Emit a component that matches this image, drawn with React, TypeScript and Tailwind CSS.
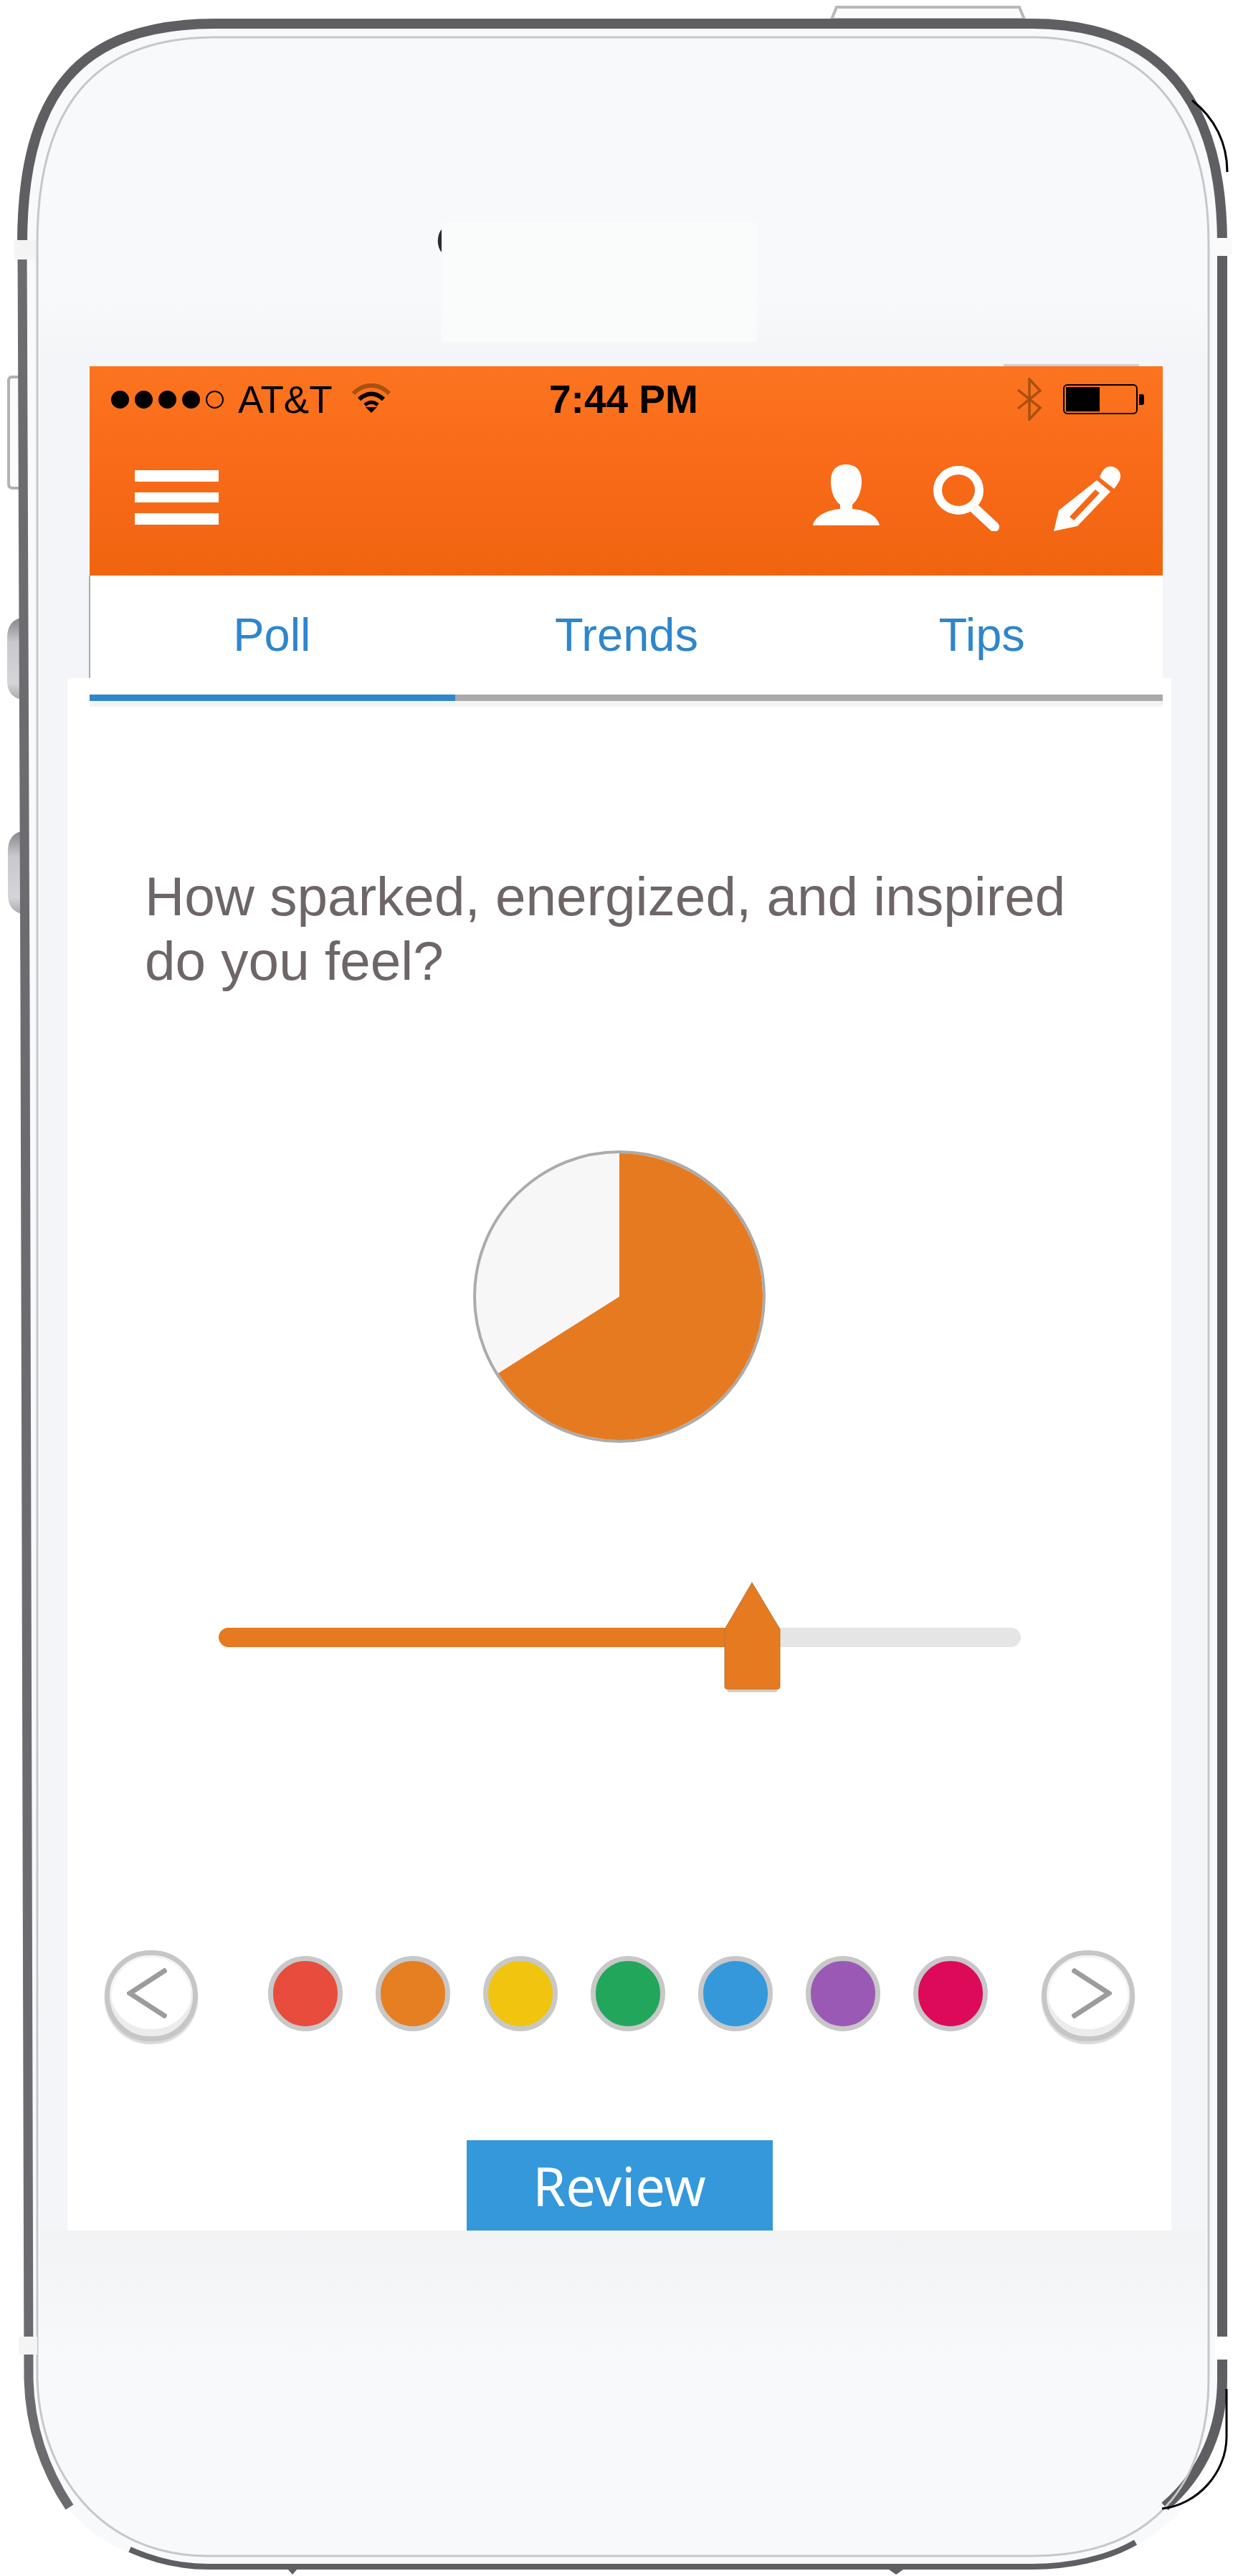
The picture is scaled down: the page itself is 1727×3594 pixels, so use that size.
import React from 'react';

const swatches = ['#e74c3c', '#e67e22', '#f1c40f', '#22a65b', '#3498db', '#9b59b6', '#dd0a5a'];

// the phone body behind the screen
const PhoneFrame = () => (
  <svg className="absolute inset-0" width="1727" height="3594" viewBox="0 0 1727 3594" fill="none">
    <defs>
      <linearGradient id="chin" x1="0" y1="3112" x2="0" y2="3290" gradientUnits="userSpaceOnUse">
        <stop offset="0" stopColor="#f2f3f5" />
        <stop offset="1" stopColor="#f8f9fa" />
      </linearGradient>
      <linearGradient id="side" x1="0" y1="420" x2="0" y2="500" gradientUnits="userSpaceOnUse">
        <stop offset="0" stopColor="#f8f9fa" />
        <stop offset="1" stopColor="#f4f5f8" />
      </linearGradient>
      <linearGradient id="button" x1="0" y1="0" x2="0" y2="1">
        <stop offset="0" stopColor="#85868a" />
        <stop offset="0.3" stopColor="#c8c9cc" />
        <stop offset="0.8" stopColor="#d4d5d7" />
        <stop offset="1" stopColor="#a9aaae" />
      </linearGradient>
    </defs>
    {/* side buttons */}
    <path d="M28 526 H16 Q12 526 12 532 V675 Q12 681 18 681 H28" stroke="#b0b2b6" strokeWidth="4" fill="#fafafa" />
    <path d="M30 862 Q10 866 10 890 V950 Q10 972 30 976 Z" fill="url(#button)" />
    <path d="M30 1160 Q11 1164 11 1188 V1248 Q11 1270 30 1275 Z" fill="url(#button)" />
    <path d="M1160 27 L1167 10 H1422 L1429 27 Z" fill="#fbfbfb" stroke="#b8b8b8" strokeWidth="4" />
    {/* body */}
    <path
      d="M31 340 C31 130 110 33 300 33 H1440 C1610 33 1705 130 1705 340 V3320 C1705 3480 1620 3581 1440 3581 H290 C130 3581 40 3480 40 3320 Z"
      fill="#f8f9fa"
    />
    <path d="M56 420 H1683 V3112 H56 Z" fill="url(#side)" />
    <path d="M56 3112 H1683 V3290 H56 Z" fill="url(#chin)" />
    {/* dark metal band */}
    <path
      d="M31 340 C31 130 110 33 300 33 H1440 C1610 33 1705 130 1705 340 V3320 C1705 3385 1680 3450 1625 3497"
      stroke="#5f5e63"
      strokeWidth="14"
    />
    <path d="M31 340 L35 1400 L40 3320 C42 3390 65 3450 97 3498" stroke="#6b6b70" strokeWidth="13" />
    <path d="M181 3557 C215 3572 250 3581 290 3581 H1440 C1490 3581 1545 3570 1584 3547" stroke="#5f5e63" strokeWidth="8" />
    {/* inner hairline */}
    <path
      d="M52 340 C52 150 130 52 300 52 H1440 C1590 52 1686 150 1686 340 V3320 C1686 3440 1630 3566 1440 3566 H290 C140 3566 56 3450 52 3320 Z"
      stroke="#c6c7cb"
      strokeWidth="3"
    />
    {/* antenna gaps */}
    <rect x="20" y="335" width="30" height="27" fill="#f4f4f5" />
    <rect x="1695" y="332" width="24" height="25" fill="#fafafa" />
    <rect x="26" y="3260" width="26" height="25" fill="#f4f4f5" />
    <rect x="1695" y="3260" width="24" height="32" fill="#ffffff" />
    {/* black edge on the right corners */}
    <path d="M1663 140 C1695 165 1712 200 1712 240" stroke="#000000" strokeWidth="3" />
    <path d="M1711 3333 V3400 C1711 3450 1670 3495 1621 3500" stroke="#000000" strokeWidth="3" />
    {/* bottom ticks */}
    <path d="M402 3585 H414 L408 3592 Z" fill="#5f5e63" />
    <path d="M1240 3585 H1260 L1250 3592 Z" fill="#5f5e63" />
    {/* camera patch */}
    <rect x="616" y="310" width="440" height="167" fill="#fafbfb" />
    <path d="M616 320 C609 328 609 344 616 352 Z" fill="#2b2b30" />
    <rect x="1400" y="508" width="189" height="3" fill="#d0d0d0" />
  </svg>
);

const StatusBar = () => (
  <div className="relative flex h-[72px] items-center pl-[30px] pr-[35px] pt-[20px] text-[53px] leading-none text-black">
    <div className="flex gap-[8px]">
      {[0, 1, 2, 3].map((i) => (
        <span key={i} className="h-[25px] w-[25px] rounded-full bg-black" />
      ))}
      <span className="h-[25px] w-[25px] rounded-full border-2 border-black" />
    </div>
    <span className="ml-[20px] w-[158px]">AT&amp;T</span>
    <svg width="56" height="41" viewBox="0 0 56 41" className="mt-[-4px]">
      <path d="M3 14 C18 -1 38 -1 53 14" stroke="#a8500f" strokeWidth="6" fill="none" />
      <path d="M11 22 C22 12 34 12 45 22" stroke="#000" strokeWidth="6" fill="none" />
      <path d="M19 30 C25 25 31 25 37 30 L37 30" stroke="#000" strokeWidth="5" fill="none" />
      <path d="M20 33 H36 L28 41 Z" fill="#000" />
    </svg>
    <span className="ml-[220px] text-[55px] font-bold">7:44 PM</span>
    <svg width="36" height="60" viewBox="0 0 36 60" className="ml-auto">
      <path d="M2 17 L33 42 L18 58 V2 L33 18 L2 43" stroke="#a8500f" strokeWidth="3.5" fill="none" />
    </svg>
    <div className="relative ml-[29px] h-[42px] w-[104px] rounded-[6px] border-2 border-black">
      <div className="absolute bottom-[2px] left-[2px] top-[2px] w-[47px] bg-black" />
      <div className="absolute right-[-11px] top-[12px] h-[15px] w-[7px] rounded-r-[3px] bg-black" />
    </div>
  </div>
);

const NavBar = () => (
  <div className="flex h-[220px] items-start pl-[63px] pr-[59px] pt-[65px]">
    <div className="mt-[8px] flex flex-col gap-[15px]">
      <div className="h-[16px] w-[117px] bg-white" />
      <div className="h-[14px] w-[117px] bg-white" />
      <div className="h-[16px] w-[117px] bg-white" />
    </div>
    <svg width="93" height="85" viewBox="0 0 93 85" className="ml-auto" fill="#fff">
      <path d="M46 0 C60 0 68 8 68 24 C68 38 62 50 55 56 V62 C76 64 90 72 93 85 H0 C3 72 18 64 38 62 V56 C30 50 25 38 25 24 C25 8 33 0 46 0 Z" />
    </svg>
    <svg width="93" height="91" viewBox="0 0 93 91" className="ml-[75px] mt-[2px]" fill="none" stroke="#fff">
      <ellipse cx="35" cy="34" rx="29" ry="28" strokeWidth="12" />
      <path d="M57 59 L85 85" strokeWidth="14" strokeLinecap="round" />
    </svg>
    <svg width="93" height="91" viewBox="0 0 93 91" className="ml-[75px] mt-[2px]" fill="#fff" fillRule="evenodd">
      <path d="M72 3 C80 -3 93 3 93 14 C93 20 90 24 84 32 L64 16 C66 10 68 6 72 3 Z M60 20 L79 36 L33 84 L0 91 L7 62 Z M58 33 L22 71 L28 76 L64 38 Z" />
    </svg>
  </div>
);

const RoundArrow = ({ dir }: { dir: 'left' | 'right' }) => (
  <div className="relative h-[127px] w-[130px] shrink-0 rounded-full border-[7px] border-[#c6c6c6] bg-white shadow-[inset_0_-10px_0_#ececec,inset_0_0_0_3px_#f4f4f4,0_4px_2px_#d8d8d8]">
    {dir === 'left' ? (
      <svg width="56" height="70" viewBox="0 0 56 70" className="absolute left-[24px] top-[18px]" fill="none">
        <path d="M55 2 L4 35 L55 68" stroke="#9c9c9c" strokeWidth="7" />
      </svg>
    ) : (
      <svg width="56" height="70" viewBox="0 0 56 70" className="absolute left-[35px] top-[18px]" fill="none">
        <path d="M1 2 L52 35 L1 68" stroke="#9c9c9c" strokeWidth="7" />
      </svg>
    )}
  </div>
);

const App = () => {
  return (
    <div className="relative h-[3594px] w-[1727px] overflow-hidden bg-white font-['Liberation_Sans',sans-serif]">
      <PhoneFrame />

      <div className="relative pl-[94px] pt-[511px]">
        <div className="w-[1540px]">
          {/* Orange header */}
          <div className="ml-[31px] h-[292px] w-[1497px] bg-gradient-to-b from-[#fc741f] via-[#f86a18] to-[#f0640f]">
            <StatusBar />
            <NavBar />
          </div>

          {/* Tabs */}
          <div className="ml-[30px] grid h-[143px] w-[1498px] grid-cols-3 border-l-2 border-[#a9abb0] bg-white pt-[47px] text-center text-[65px] leading-[72px] text-[#2e86cc]">
            <div className="pl-[8px]">Poll</div>
            <div>Trends</div>
            <div className="pr-[6px]">Tips</div>
          </div>

          {/* Poll body */}
          <div className="flex h-[2166px] flex-col bg-white pt-[23px]">
            <div className="ml-[31px] flex h-[9px] w-[1497px]">
              <div className="w-[510px] bg-[#2e86cc]" />
              <div className="flex-1 bg-[#aaaaaa]" />
            </div>
            <div className="ml-[31px] h-[8px] w-[1497px] bg-[#f3f3f3]" />

            <p className="ml-[108px] mt-[220px] w-[1320px] text-[76.5px] leading-[90px] text-[#6e6566]">
              How sparked, energized, and inspired do you feel?
            </p>

            <div className="mt-[218px] flex justify-center">
              <svg width="410" height="410" viewBox="0 0 410 410">
                <circle cx="205" cy="205" r="202" fill="#f7f7f7" stroke="#ababab" strokeWidth="4" />
                <path d="M205 205 V5 A200 200 0 1 1 36 312 Z" fill="#e67a21" />
              </svg>
            </div>

            {/* Slider */}
            <div className="relative mx-auto mt-[257px] flex h-[27px] w-[1119px]">
              <div className="w-[730px] rounded-l-full bg-[#e67a21]" />
              <div className="flex-1 rounded-r-full bg-[#e5e5e5]" />
              <svg width="80" height="154" viewBox="0 0 80 154" className="absolute left-[705px] top-[-64px]">
                <path d="M39 1 L78 66 V146 Q78 150 73 150 H6 Q1 150 1 146 V66 Z" fill="#e67a21" stroke="#b4763c" strokeWidth="1" />
                <path d="M4 151 H75 L73 154 H6 Z" fill="#cfcfcf" />
              </svg>
            </div>

            {/* Colour picker */}
            <div className="mt-[423px] flex items-start pl-[52px]">
              <RoundArrow dir="left" />
              <div className="ml-[98px] mt-[8px] flex gap-[46px]">
                {swatches.map((c) => (
                  <div
                    key={c}
                    className="h-[105px] w-[104px] rounded-full border-[7px] border-[#c8c8c8]"
                    style={{ backgroundColor: c }}
                  />
                ))}
              </div>
              <div className="ml-[75px]">
                <RoundArrow dir="right" />
              </div>
            </div>

            <div className="mx-auto mt-[138px] flex h-[126px] w-[427px] items-center justify-center bg-[#3498db] font-['Noto_Sans',sans-serif] text-[74px] text-white">
              Review
            </div>
          </div>
        </div>
      </div>
    </div>
  );
};

export default App;
